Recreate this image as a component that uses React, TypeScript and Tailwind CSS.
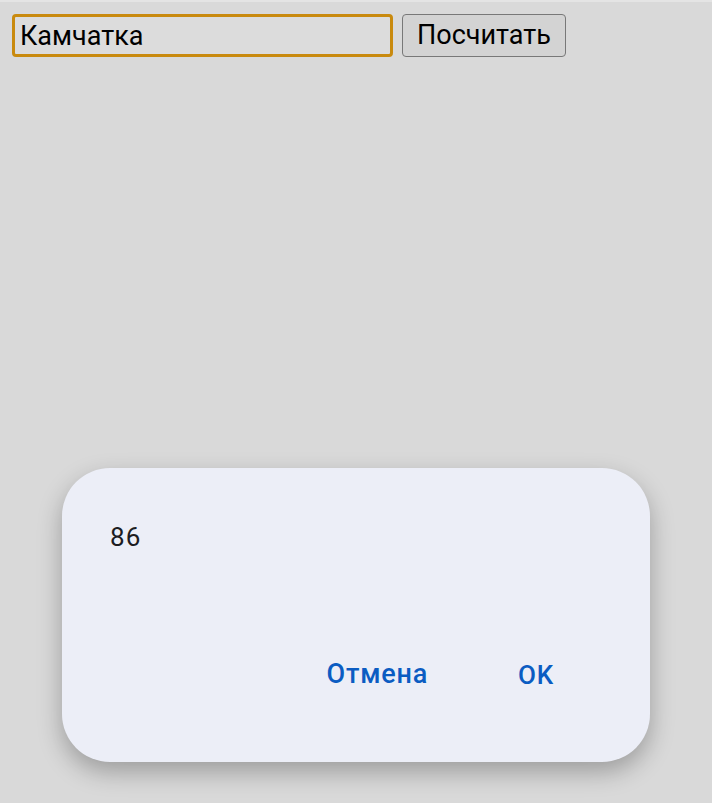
export default function App() {
  return (
    <div className="relative min-h-[803px] w-full bg-[#d9d9d9] border-t-2 border-[#e4e4e4]" style={{ fontFamily: "Roboto, 'Noto Sans', sans-serif" }}>
      {/* form row */}
      <div className="flex items-start gap-[9px] pl-[12px] pt-[12px]">
        <input
          defaultValue="Камчатка"
          className="h-[43px] w-[381px] rounded-[4px] border-[3px] border-[#c98a0e] bg-[#dcdcdc] px-[5px] text-[27px] text-black outline-none"
        />
        <button className="h-[43px] w-[164px] rounded-[4px] border-[1.5px] border-[#787878] bg-[#d3d3d3] text-[27px] text-black">
          Посчитать
        </button>
      </div>

      {/* dialog */}
      <div className="absolute left-[62px] top-[466px] flex h-[294px] w-[588px] flex-col rounded-[48px] bg-[#eceef7] shadow-[0_10px_24px_rgba(0,0,0,0.28)]">
        <div className="pl-[48px] pt-[56px] text-[26px] leading-none tracking-[0.04em] text-[#1c1c22]">86</div>
        <div className="mt-auto mb-[74px] flex justify-end gap-[90px] pr-[96px]">
          <button className="text-[27px] font-medium leading-none tracking-[0.03em] text-[#0b5cc2]">Отмена</button>
          <button className="text-[26px] font-medium leading-none tracking-[0.03em] text-[#0b5cc2]">OK</button>
        </div>
      </div>
    </div>
  );
}
